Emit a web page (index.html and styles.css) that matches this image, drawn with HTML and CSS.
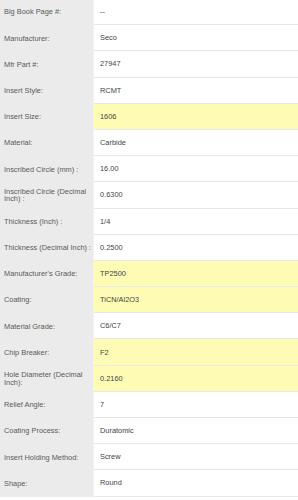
FILE: index.html
```html
<!DOCTYPE html>
<html lang="en">
<head>
    <meta charset="UTF-8">
    <title>Product Specs</title>
    <link rel="stylesheet" href="styles.css">
</head>
<body>
<div class="specs">
    <div class="row"><div class="label">Big Book Page #:</div><div class="value">--</div></div>
    <div class="row"><div class="label">Manufacturer:</div><div class="value">Seco</div></div>
    <div class="row"><div class="label">Mfr Part #:</div><div class="value">27947</div></div>
    <div class="row"><div class="label">Insert Style:</div><div class="value">RCMT</div></div>
    <div class="row hl"><div class="label">Insert Size:</div><div class="value">1606</div></div>
    <div class="row"><div class="label">Material:</div><div class="value">Carbide</div></div>
    <div class="row"><div class="label">Inscribed Circle (mm) :</div><div class="value">16.00</div></div>
    <div class="row"><div class="label">Inscribed Circle (Decimal Inch) :</div><div class="value">0.6300</div></div>
    <div class="row"><div class="label">Thickness (Inch) :</div><div class="value">1/4</div></div>
    <div class="row"><div class="label">Thickness (Decimal Inch) :</div><div class="value">0.2500</div></div>
    <div class="row hl"><div class="label">Manufacturer's Grade:</div><div class="value">TP2500</div></div>
    <div class="row hl"><div class="label">Coating:</div><div class="value">TiCN/Al2O3</div></div>
    <div class="row"><div class="label">Material Grade:</div><div class="value">C6/C7</div></div>
    <div class="row hl"><div class="label">Chip Breaker:</div><div class="value">F2</div></div>
    <div class="row hl"><div class="label">Hole Diameter (Decimal Inch):</div><div class="value">0.2160</div></div>
    <div class="row"><div class="label">Relief Angle:</div><div class="value">7</div></div>
    <div class="row"><div class="label">Coating Process:</div><div class="value">Duratomic</div></div>
    <div class="row"><div class="label">Insert Holding Method:</div><div class="value">Screw</div></div>
    <div class="row"><div class="label">Shape:</div><div class="value">Round</div></div>
</div>
</body>
</html>
```
FILE: styles.css
```css
body{
    margin: 0;
    background: #fff;
    font-family: "Liberation Sans", Arial, sans-serif;
    font-size: 7.4px;
}
.specs{
    margin-top: -1px;
    width: 298px;
}
.row{
    display: flex;
    height: 26.2px;
}
.row .label{
    width: 94px;
    flex-shrink: 0;
    box-sizing: border-box;
    padding: 0 0 0 4px;
    background: #ebebeb;
    color: #5a5a5a;
    line-height: 7.4px;
    display: flex;
    align-items: center;
    border-right: 1px solid #f3f3f3;
}
.row .value{
    flex: 1;
    padding-left: 6px;
    color: #444;
    display: flex;
    align-items: center;
    border-bottom: 1px solid #e8e8e8;
}
.row.hl .value{
    background: #fefcb4;
}
```
